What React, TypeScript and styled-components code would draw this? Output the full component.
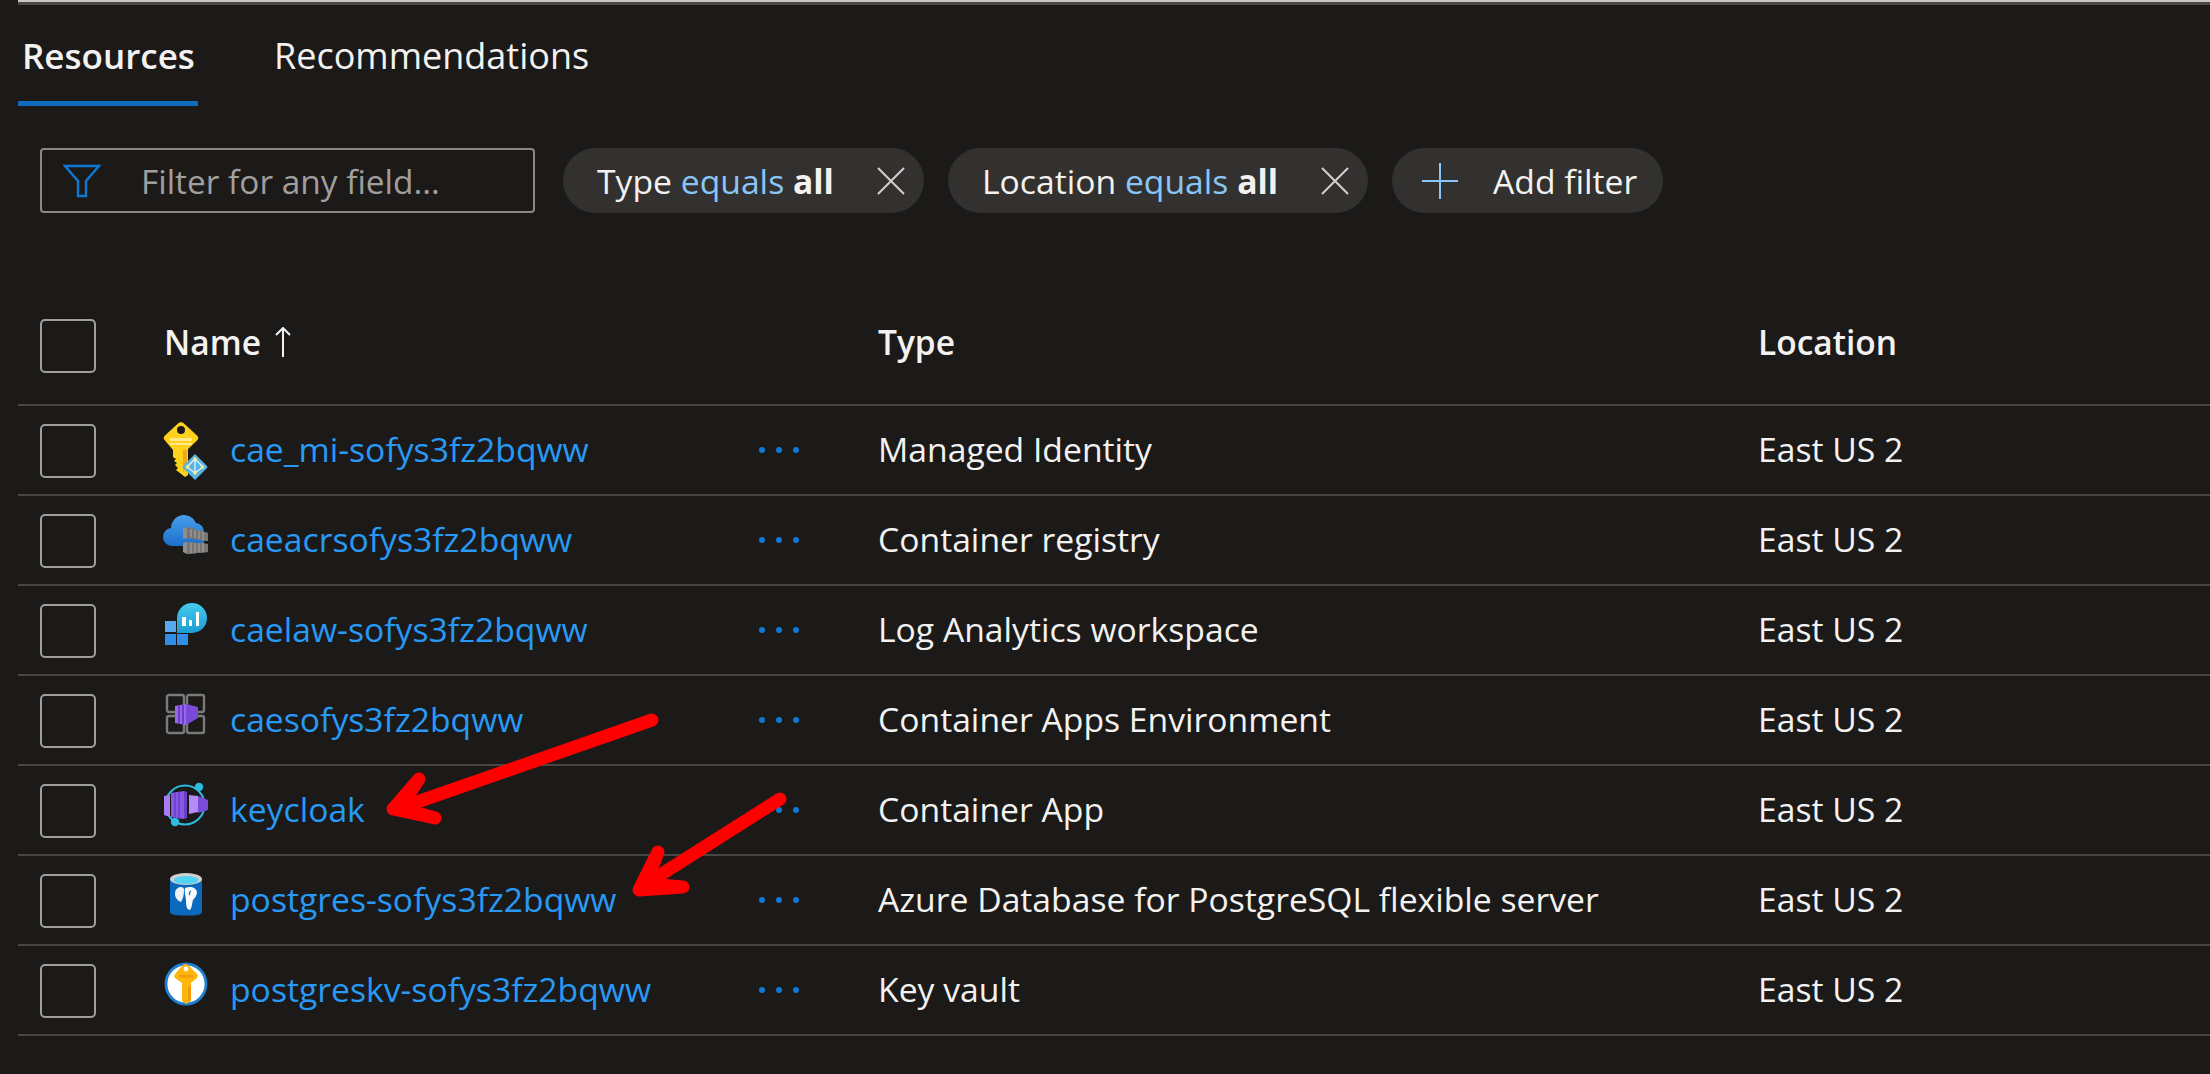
import React from 'react';
import styled, { createGlobalStyle } from 'styled-components';

const GlobalStyle = createGlobalStyle`
  html, body {
    margin: 0;
    padding: 0;
    background: #1b1a19;
  }
  body {
    font-family: "Open Sans", "Noto Sans", "Liberation Sans", sans-serif;
    color: #f3f2f1;
    overflow: hidden;
  }
`;

const Page = styled.div`
  position: relative;
  width: 2210px;
  height: 1074px;
  background: #1b1a19;
  overflow: hidden;
`;

const TopRule = styled.div`
  margin-left: 18px;
  height: 2px;
  background: #c8c6c4;
  border-bottom: 3px solid #4a4948;
`;

const Tabs = styled.div`
  display: flex;
  margin-left: 18px;
  gap: 76px;
  height: 101px;
`;

const Tab = styled.div<{ $active?: boolean }>`
  width: ${(p) => (p.$active ? '180px' : 'auto')};
  padding: 23px 0 0 ${(p) => (p.$active ? '4px' : '0')};
  box-sizing: border-box;
  font-size: ${(p) => (p.$active ? '35px' : '36px')};
  line-height: 56px;
  font-weight: ${(p) => (p.$active ? 600 : 400)};
  white-space: nowrap;
  border-bottom: ${(p) => (p.$active ? '5px solid #0f6cbd' : '0')};
`;

const FilterBar = styled.div`
  display: flex;
  align-items: stretch;
  gap: 24px;
  margin: 42px 0 0 40px;
  height: 65px;
`;

const SearchBox = styled.div`
  display: flex;
  align-items: center;
  gap: 40px;
  width: 495px;
  margin-right: 4px;
  box-sizing: border-box;
  padding-left: 21px;
  border: 2px solid #8a8886;
  border-radius: 4px;
  font-size: 33.400px;
  color: #a19f9d;
`;

const Pill = styled.div<{ $width: number }>`
  display: flex;
  align-items: center;
  width: ${(p) => p.$width}px;
  box-sizing: border-box;
  padding: 0 18px 0 34px;
  background: #323130;
  border-radius: 33px;
  font-size: 33.700px;
  white-space: nowrap;
`;

const PillLabel = styled.span`
  flex: 1;
`;

const Operator = styled.span`
  color: #8ac5f7;
`;

const PillValue = styled.b`
  font-weight: 700;
`;

const AddPill = styled(Pill)`
  gap: 35px;
  padding: 0 0 0 30px;
`;

const Table = styled.div`
  margin: 0 0 0 18px;
`;

const gridColumns = '147px 713px 880px 1fr';

const HeaderRow = styled.div`
  display: grid;
  grid-template-columns: ${gridColumns};
  align-items: center;
  height: 124px;
  margin-top: 67px;
  font-size: 33.500px;
  font-weight: 600;
  border-bottom: 2px solid #484644;
`;

const Row = styled.div`
  display: grid;
  grid-template-columns: ${gridColumns};
  align-items: center;
  height: 88px;
  font-size: 33.700px;
  border-bottom: 2px solid #484644;
`;

const Checkbox = styled.div<{ $header?: boolean }>`
  width: 56px;
  height: 54px;
  margin: ${(p) => (p.$header ? '8px' : '2px')} 0 0 22px;
  box-sizing: border-box;
  border: 2px solid #a19f9d;
  border-radius: 5px;
`;

const TextCell = styled.div`
  padding-bottom: 2px;
`;

const SortLabel = styled.div`
  display: flex;
  align-items: center;
  gap: 14px;
  margin-left: -1px;
`;

const NameCell = styled.div`
  display: flex;
  align-items: center;
  justify-content: space-between;
  padding-right: 79px;
  margin-left: -3px;
`;

const NameLink = styled.a`
  display: flex;
  align-items: center;
  gap: 20px;
  color: #2899f5;
`;

const NameText = styled.span`
  padding-bottom: 2px;
`;

const ResourceIcon = styled.svg`
  display: block;
  width: 48px;
  height: 60px;
  flex: none;
`;

const MoreDots = styled.div`
  display: flex;
  gap: 11px;
`;

const Dot = styled.span`
  width: 6px;
  height: 6px;
  border-radius: 50%;
  background: #0f78d4;
`;

const Arrows = styled.svg`
  position: absolute;
  left: 0;
  top: 0;
  pointer-events: none;
`;

const FunnelIcon = () => (
  <svg width="38" height="34" viewBox="0 0 38 34" fill="none" stroke="#0f78d4" strokeWidth="2.4">
    <path d="M2 2h34L23 17v15h-8V17z" />
  </svg>
);

const CloseIcon = () => (
  <svg width="30" height="30" viewBox="0 0 30 30" stroke="#d2d0ce" strokeWidth="2">
    <path d="M2 2l26 26M28 2L2 28" />
  </svg>
);

const PlusIcon = () => (
  <svg width="36" height="36" viewBox="0 0 36 36" stroke="#8ac5f7" strokeWidth="2">
    <path d="M18 0v36M0 18h36" />
  </svg>
);

const SortArrow = () => (
  <svg width="16" height="30" viewBox="0 0 16 30" fill="none" stroke="#f3f2f1" strokeWidth="2">
    <path d="M8 1v29M1 8l7-7 7 7" />
  </svg>
);

const KeyIdentityIcon = () => (
  <ResourceIcon viewBox="0 0 48 60">
    <path
      d="M16 3.5a4 4 0 0 1 6 0l13 12a3.5 3.5 0 0 1 0 5L26 29v26l-3 2-9-7 2-2-3-3 2-2-3-2 2-2-3-2V30L3 20.500a3.500 3.500 0 0 1 0-5z"
      fill="#ffd11a"
    />
    <circle cx="19" cy="10" r="4" fill="#1b1a19" />
    <path d="M8 18h22v3H8zM8 23h22v2H8z" fill="#ffe98a" />
    <path d="M21 30h4v18l-4 4z" fill="#f2a81d" />
    <path d="M33 34l12 12a1.500 1.500 0 0 1 0 2L33 60 21 48a1.500 1.500 0 0 1 0-2z" fill="#5ab4e0" />
    <path d="M33 39v14M25 47l8-8 8 8-8 6z" fill="none" stroke="#e8f6fd" strokeWidth="1.300" />
    <circle cx="33" cy="39" r="1.800" fill="#ffe98a" />
    <circle cx="25.500" cy="47" r="1.800" fill="#ffe98a" />
    <circle cx="40.500" cy="47" r="1.800" fill="#ffe98a" />
    <circle cx="33" cy="53" r="1.800" fill="#ffe98a" />
  </ResourceIcon>
);

const RegistryIcon = () => (
  <ResourceIcon viewBox="0 0 48 60">
    <defs>
      <linearGradient id="cloudFill" x1="0" y1="0" x2="0" y2="1">
        <stop offset="0" stopColor="#4a9eeb" />
        <stop offset="1" stopColor="#1b6ecb" />
      </linearGradient>
    </defs>
    <path
      d="M11 36a9 9 0 0 1-2-18 13 13 0 0 1 25-5 9 9 0 0 1 8 10v13z"
      fill="url(#cloudFill)"
    />
    <path d="M21 18l4-1 21 6v8l-21-3-4 1z" fill="#8f8e8d" />
    <path d="M25 17l21 6v8l-21-3z" fill="#767574" />
    <path d="M21 33l4-1 21 2v8l-21 2-4-2z" fill="#8f8e8d" />
    <path d="M25 32l21 2v8l-21 2z" fill="#767574" />
    <path d="M29 19v8M33 20v8M37 21v8M41 22v8M29 33v10M33 33v10M37 33v9M41 33v9" stroke="#a9a8a7" strokeWidth="1" />
  </ResourceIcon>
);

const LogAnalyticsIcon = () => (
  <ResourceIcon viewBox="0 0 48 60">
    <defs>
      <linearGradient id="bubbleFill" x1="0" y1="0" x2="0" y2="1">
        <stop offset="0" stopColor="#45cdee" />
        <stop offset="1" stopColor="#1c9bd2" />
      </linearGradient>
    </defs>
    <path d="M30 3a15 15 0 1 1 0 30H15V18A15 15 0 0 1 30 3z" fill="url(#bubbleFill)" />
    <path d="M20 17h4v9h-4zM27 20h3v6h-3zM34 12h3v14h-3z" fill="#fff" />
    <rect x="3" y="21" width="11" height="11" fill="#5aa8ee" />
    <rect x="3" y="34" width="11" height="11" fill="#2f8fe6" />
    <rect x="15" y="34" width="11" height="11" fill="#2f8fe6" />
  </ResourceIcon>
);

const EnvironmentIcon = () => (
  <ResourceIcon viewBox="0 0 48 60">
    <g fill="none" stroke="#7b7a79" strokeWidth="2.400">
      <rect x="5" y="5" width="17" height="17" rx="2" />
      <rect x="25" y="5" width="17" height="17" rx="2" />
      <rect x="5" y="26" width="17" height="17" rx="2" />
      <rect x="25" y="26" width="17" height="17" rx="2" />
    </g>
    <path d="M13 16l5-1 6-1v21l-11-2z" fill="#9966ee" />
    <path d="M16 15h2v19h-2zM20 15h2v19h-2z" fill="#6a3fc4" />
    <path d="M24 14l12 3v11l-12 7z" fill="#7a4ad8" />
  </ResourceIcon>
);

const ContainerAppIcon = () => (
  <ResourceIcon viewBox="0 0 48 60">
    <circle cx="23" cy="25" r="19.500" fill="none" stroke="#2bbce0" strokeWidth="2" />
    <circle cx="37" cy="7" r="4.200" fill="#2bbce0" />
    <circle cx="13" cy="42" r="4.200" fill="#2bbce0" />
    <path d="M2 16l6-1v22l-6-2z" fill="#a77bf3" />
    <path d="M9 13l13-2v28l-13-2z" fill="#8a57e6" />
    <path d="M13 12v26M17 12v27" stroke="#6a3fc4" strokeWidth="1.500" />
    <path d="M22 11l3 1v26l-3 1z" fill="#6a3fc4" />
    <path d="M27 15l9 1v16l-9 2z" fill="#b48cf6" />
    <path d="M36 16l10 4v10l-10 3z" fill="#7a4ad8" />
  </ResourceIcon>
);

const PostgresIcon = () => (
  <ResourceIcon viewBox="0 0 48 60">
    <path d="M8 9v33c0 3 7 3.500 16 3.500S40 45 40 42V9z" fill="#0a69bd" />
    <ellipse cx="24" cy="9" rx="16" ry="6" fill="#d2d0ce" />
    <ellipse cx="24" cy="10" rx="12.500" ry="4" fill="#4fd5f2" />
    <path d="M13 24c0-5 3-7 6-7 2 0 3 1 3 3 0 5-1 9-3 12-3-1-6-4-6-8z" fill="#eaf3fa" />
    <path d="M23 18c5-2 11-1 12 4 0 3-2 6-4 8-1 3-1 8-3 10-3 0-4-4-4-9 0-4-2-9-1-13z" fill="#f7fbfe" />
    <path d="M29 21c-2 1-2 3-1 4" fill="none" stroke="#0a69bd" strokeWidth="1.200" />
  </ResourceIcon>
);

const KeyVaultIcon = () => (
  <ResourceIcon viewBox="0 0 48 60">
    <circle cx="24" cy="24" r="20" fill="#fff" stroke="#1f7fd0" strokeWidth="2.800" />
    <path
      d="M20 6a4 4 0 0 1 7 0l8 8a3 3 0 0 1 0 4l-6 5v18l-5 3-4-3V23l-7-5a3 3 0 0 1 0-4z"
      fill="#fdb60d"
    />
    <circle cx="24" cy="9" r="2.400" fill="#fff" />
    <path d="M17 15h14v2.500H17z" fill="#f59a0a" />
    <path d="M26 26h3v14l-3 2z" fill="#f59a0a" />
  </ResourceIcon>
);

const resources = [
  { name: 'cae_mi-sofys3fz2bqww', type: 'Managed Identity', icon: <KeyIdentityIcon /> },
  { name: 'caeacrsofys3fz2bqww', type: 'Container registry', icon: <RegistryIcon /> },
  { name: 'caelaw-sofys3fz2bqww', type: 'Log Analytics workspace', icon: <LogAnalyticsIcon /> },
  { name: 'caesofys3fz2bqww', type: 'Container Apps Environment', icon: <EnvironmentIcon /> },
  { name: 'keycloak', type: 'Container App', icon: <ContainerAppIcon /> },
  { name: 'postgres-sofys3fz2bqww', type: 'Azure Database for PostgreSQL flexible server', icon: <PostgresIcon /> },
  { name: 'postgreskv-sofys3fz2bqww', type: 'Key vault', icon: <KeyVaultIcon /> },
];

const App = () => (
  <Page>
    <GlobalStyle />
    <TopRule />
    <Tabs>
      <Tab $active>Resources</Tab>
      <Tab>Recommendations</Tab>
    </Tabs>
    <FilterBar>
      <SearchBox>
        <FunnelIcon />
        <span>Filter for any field...</span>
      </SearchBox>
      <Pill $width={361}>
        <PillLabel>
          Type <Operator>equals</Operator> <PillValue>all</PillValue>
        </PillLabel>
        <CloseIcon />
      </Pill>
      <Pill $width={420}>
        <PillLabel>
          Location <Operator>equals</Operator> <PillValue>all</PillValue>
        </PillLabel>
        <CloseIcon />
      </Pill>
      <AddPill $width={271}>
        <PlusIcon />
        <span>Add filter</span>
      </AddPill>
    </FilterBar>
    <Table>
      <HeaderRow>
        <Checkbox $header />
        <SortLabel>
          Name <SortArrow />
        </SortLabel>
        <div>Type</div>
        <div>Location</div>
      </HeaderRow>
      {resources.map((r) => (
        <Row key={r.name}>
          <Checkbox />
          <NameCell>
            <NameLink>
              {r.icon}
              <NameText>{r.name}</NameText>
            </NameLink>
            <MoreDots>
              <Dot />
              <Dot />
              <Dot />
            </MoreDots>
          </NameCell>
          <TextCell>{r.type}</TextCell>
          <TextCell>East US 2</TextCell>
        </Row>
      ))}
    </Table>
    <Arrows width="2210" height="1074" viewBox="0 0 2210 1074" fill="none" stroke="#ff0000" strokeWidth="13" strokeLinecap="round" strokeLinejoin="round">
      <path d="M652 720L400 808" />
      <path d="M419 779L393 809L435 818L400 808z" fill="#ff0000" />
      <path d="M780 799L646 884" />
      <path d="M658 852L639 890L683 887L646 884z" fill="#ff0000" />
    </Arrows>
  </Page>
);

export default App;
